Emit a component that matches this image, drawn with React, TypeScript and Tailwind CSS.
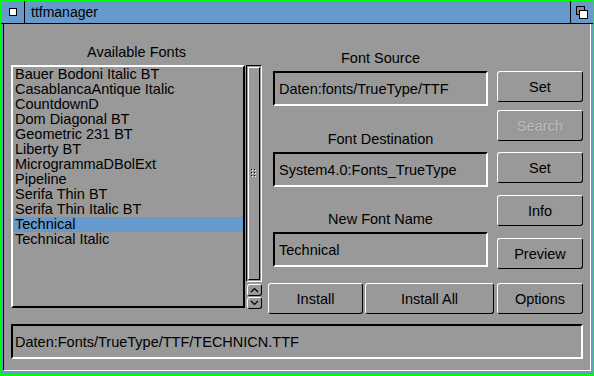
import React from "react";

const fonts = [
  "Bauer Bodoni Italic BT",
  "CasablancaAntique Italic",
  "CountdownD",
  "Dom Diagonal BT",
  "Geometric 231 BT",
  "Liberty BT",
  "MicrogrammaDBolExt",
  "Pipeline",
  "Serifa Thin BT",
  "Serifa Thin Italic BT",
  "Technical",
  "Technical Italic",
];

function Btn({
  label,
  className = "",
  disabled = false,
}: {
  label: string;
  className?: string;
  disabled?: boolean;
}) {
  return (
    <div
      className={
        "flex h-[31px] items-center justify-center rounded-[3px] border border-t-white border-l-white border-b-black border-r-black bg-[#999999] text-[14.5px] leading-[16px] " +
        (disabled ? "text-[#bdbdbd] [text-shadow:1px_1px_0_#8a8a8a] " : "text-black ") +
        className
      }
    >
      {label}
    </div>
  );
}

function Field({ value, className = "" }: { value: string; className?: string }) {
  return (
    <div
      className={
        "flex h-[35px] items-center border-2 border-t-black border-l-black border-b-white border-r-white pl-[4px] text-[14.5px] leading-[16px] text-black " +
        className
      }
    >
      {value}
    </div>
  );
}

function Label({ text, className = "" }: { text: string; className?: string }) {
  return (
    <div className={"h-[16px] text-center text-[14.5px] leading-[16px] text-black " + className}>
      {text}
    </div>
  );
}

function Arrow({ up, className = "" }: { up: boolean; className?: string }) {
  return (
    <div
      className={
        "flex h-[12px] w-[15px] items-center justify-center rounded-[3px] border border-t-white border-l-white border-b-black border-r-black bg-[#999999] " +
        className
      }
    >
      <svg width="9" height="6" viewBox="0 0 9 6">
        {up ? (
          <path d="M1 5 L4.5 1.5 L8 5" fill="none" stroke="black" strokeWidth="1.2" />
        ) : (
          <path d="M1 1 L4.5 4.5 L8 1" fill="none" stroke="black" strokeWidth="1.2" />
        )}
      </svg>
    </div>
  );
}

export default function App() {
  return (
    <div className="flex h-[376px] w-[594px] flex-col border-t border-l border-r border-b-2 border-[#00ff00] bg-[#6699cc] [font-family:'Liberation_Sans',Arial,sans-serif]">
      {/* Title bar */}
      <div className="flex h-[23px] shrink-0 border-b border-black">
        <div className="flex w-[23px] items-center justify-center">
          <div className="h-[8px] w-[8px] border border-black bg-white" />
        </div>
        <div className="w-px bg-black" />
        <div className="flex flex-1 items-center pl-[6px] text-[14px] leading-[16px] text-black">
          ttfmanager
        </div>
        <div className="w-px bg-black" />
        <div className="w-[22px]">
          <svg width="22" height="22" viewBox="0 0 22 22">
            <rect x="5.5" y="5.5" width="8" height="8" fill="#888888" stroke="black" />
            <rect x="8.5" y="9.5" width="8" height="8" fill="white" stroke="black" />
          </svg>
        </div>
      </div>

      {/* Body */}
      <div className="mx-[2px] mb-[3px] flex flex-1 flex-col border-l border-r border-b border-l-black border-r-white border-b-white bg-[#999999] pl-[7px] pr-[7px]">
        <div className="flex h-[290px] items-start">
          {/* Left column */}
          <div className="flex w-[251px] flex-col pt-[20px]">
            <Label text="Available Fonts" />
            <div className="mt-[5px] flex">
              <div className="h-[243px] w-[234px] border-2 border-t-white border-l-white border-b-black border-r-black">
                {fonts.map((f) => (
                  <div
                    key={f}
                    className={
                      "h-[15px] whitespace-nowrap pl-[2px] text-[14.5px] leading-[15px] text-black " +
                      (f === "Technical" ? "bg-[#6699cc]" : "")
                    }
                  >
                    {f}
                  </div>
                ))}
              </div>
              <div className="ml-[1px] flex w-[16px] flex-col">
                <div className="h-[217px] border border-t-black border-l-black border-b-white border-r-white p-[1px]">
                  <div className="flex h-full items-center justify-center border border-t-white border-l-white border-b-black border-r-black bg-[#999999]">
                    <svg width="6" height="9" viewBox="0 0 6 9">
                      <rect x="0" y="0" width="1" height="1" fill="black" />
                      <rect x="0" y="3" width="1" height="1" fill="black" />
                      <rect x="0" y="6" width="1" height="1" fill="black" />
                      <rect x="3" y="0" width="1" height="1" fill="black" />
                      <rect x="3" y="3" width="1" height="1" fill="black" />
                      <rect x="3" y="6" width="1" height="1" fill="black" />
                      <rect x="1" y="1" width="1" height="1" fill="white" />
                      <rect x="1" y="4" width="1" height="1" fill="white" />
                      <rect x="1" y="7" width="1" height="1" fill="white" />
                      <rect x="4" y="1" width="1" height="1" fill="white" />
                      <rect x="4" y="4" width="1" height="1" fill="white" />
                      <rect x="4" y="7" width="1" height="1" fill="white" />
                    </svg>
                  </div>
                </div>
                <Arrow up className="mt-[2px] ml-[1px]" />
                <Arrow up={false} className="mt-[1px] ml-[1px]" />
              </div>
            </div>
          </div>

          {/* Right part */}
          <div className="ml-[6px] flex w-[315px] flex-col">
            <div className="flex h-[245px]">
              <div className="ml-[5px] flex w-[215px] flex-col pt-[26px]">
                <Label text="Font Source" />
                <Field value="Daten:fonts/TrueType/TTF" className="mt-[5px]" />
                <Label text="Font Destination" className="mt-[25px]" />
                <Field value="System4.0:Fonts_TrueType" className="mt-[5px]" />
                <Label text="New Font Name" className="mt-[24px]" />
                <Field value="Technical" className="mt-[5px]" />
              </div>
              <div className="ml-[9px] flex w-[86px] flex-col pt-[47px]">
                <Btn label="Set" />
                <Btn label="Search" disabled className="mt-[8px]" />
                <Btn label="Set" className="mt-[11px]" />
                <Btn label="Info" className="mt-[12px]" />
                <Btn label="Preview" className="mt-[12px]" />
              </div>
            </div>
            <div className="mt-[14px] flex">
              <Btn label="Install" className="w-[95px]" />
              <Btn label="Install All" className="ml-[2px] w-[129px]" />
              <Btn label="Options" className="ml-[3px] w-[86px]" />
            </div>
          </div>
        </div>

        {/* Status */}
        <div className="mt-[10px] flex h-[35px] w-[572px] items-center border-2 border-t-black border-l-black border-b-white border-r-white pl-[2px] text-[14.5px] leading-[16px] text-black">
          Daten:Fonts/TrueType/TTF/TECHNICN.TTF
        </div>
      </div>
    </div>
  );
}
